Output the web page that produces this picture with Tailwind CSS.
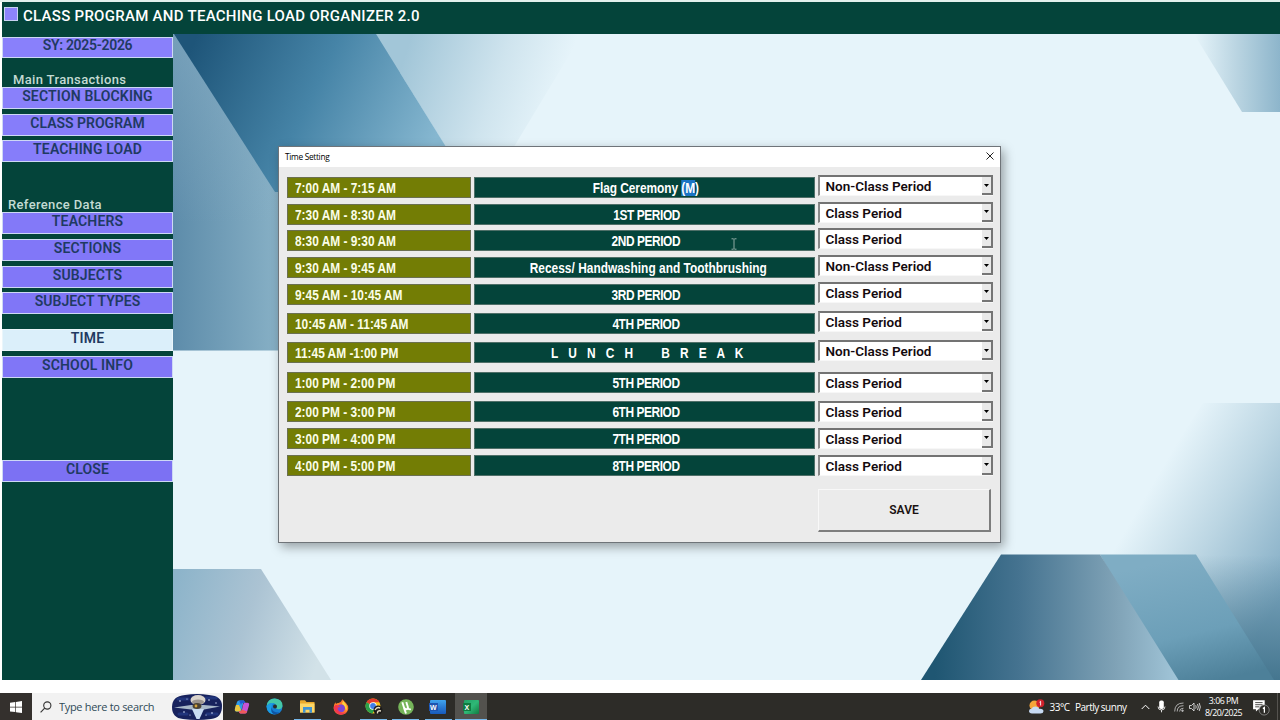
<!DOCTYPE html>
<html lang="en">
  <head>
    <meta charset="UTF-8" />
    <meta name="viewport" content="width=device-width, initial-scale=1.0" />
    <title>Class Program and Teaching Load Organizer</title>
    <script src="https://cdn.jsdelivr.net/npm/@tailwindcss/browser@4"></script>
  </head>
  <body class="w-[1280px] h-[720px] overflow-hidden bg-white font-['Roboto',sans-serif]">
    <div class="relative flex flex-col h-[720px]">
      <!-- header -->
      <header class="flex h-[34px] pl-[2px] border-t-2 border-[#e3f1ec] bg-white shrink-0">
        <div class="flex flex-1 bg-[#04443a] pl-[2px]">
          <div class="w-[14px] h-[14px] mt-[5px] border border-[#c9d2f2] bg-[#8d84fb]"></div>
          <h1 class="ml-[5px] mt-[4px] text-[15px] leading-5 font-medium text-white whitespace-nowrap tracking-[0.28px]">CLASS PROGRAM AND TEACHING LOAD ORGANIZER 2.0</h1>
        </div>
      </header>

      <main class="flex h-[646px] pl-[2px] shrink-0">
        <!-- sidebar -->
        <nav class="w-[171px] shrink-0 bg-[#04443a] pt-[2.5px] text-[14px] leading-[17px] font-semibold text-[#1f3a62] text-center tracking-[0.15px]">
          <div class="h-[21.5px] border border-[#cdd8f5] bg-[#8980fb] leading-[15px] tracking-[-0.3px]">SY: 2025-2026</div>
          <p class="mt-[13px] h-[16px] pl-[11px] text-left text-[13px] font-medium tracking-[0.35px] text-[#c3dbd3]">Main Transactions</p>
          <div class="h-[22px] border border-[#cdd8f5] bg-[#8980fb]">SECTION BLOCKING</div>
          <div class="mt-[4.5px] h-[22px] border border-[#cdd8f5] bg-[#867dfa] tracking-[0px]">CLASS PROGRAM</div>
          <div class="mt-[4.7px] h-[22px] border border-[#cdd8f5] bg-[#867dfa]">TEACHING LOAD</div>
          <p class="mt-[34px] h-[16px] pl-[6px] text-left text-[13px] font-medium tracking-[0.35px] text-[#c3dbd3]">Reference Data</p>
          <div class="h-[22px] border border-[#cdd8f5] bg-[#8379f8]">TEACHERS</div>
          <div class="mt-[4.7px] h-[22px] border border-[#cdd8f5] bg-[#8177f8]">SECTIONS</div>
          <div class="mt-[4.7px] h-[22px] border border-[#cdd8f5] bg-[#8177f8]">SUBJECTS</div>
          <div class="mt-[4.7px] h-[22px] border border-[#cdd8f5] bg-[#8076f7] tracking-[0px]">SUBJECT TYPES</div>
          <div class="mt-[15px] h-[22px] border border-[#eaf6fb] bg-[#dbeffa] leading-[16px]">TIME</div>
          <div class="mt-[4.7px] h-[22px] border border-[#cdd8f5] bg-[#8076f7]">SCHOOL INFO</div>
          <div class="mt-[81.800px] h-[22px] border border-[#cdd8f5] bg-[#7c71f3]">CLOSE</div>
        </nav>

        <!-- wallpaper -->
        <svg class="flex-1 h-[646px]" viewBox="173 34 1107 646" preserveAspectRatio="none">
          <defs>
            <linearGradient id="leftPanel" gradientUnits="userSpaceOnUse" x1="173" y1="0" x2="330" y2="0">
              <stop offset="0" stop-color="#5d8caa" /><stop offset="1" stop-color="#9cc2d3" />
            </linearGradient>
            <linearGradient id="leftPanelTop" x1="0" y1="0" x2="0" y2="1">
              <stop offset="0" stop-color="#8db2c8" stop-opacity=".5" /><stop offset=".6" stop-color="#8db2c8" stop-opacity="0" />
            </linearGradient>
            <linearGradient id="darkHex" gradientUnits="userSpaceOnUse" x1="195" y1="40" x2="430" y2="150">
              <stop offset="0" stop-color="#1e5579" /><stop offset=".5" stop-color="#4684a7" /><stop offset="1" stop-color="#86b7d0" />
            </linearGradient>
            <linearGradient id="lightHex" gradientUnits="userSpaceOnUse" x1="400" y1="70" x2="550" y2="120">
              <stop offset="0" stop-color="#a2c6d8" /><stop offset=".6" stop-color="#cfe4ee" /><stop offset="1" stop-color="#e6f4fa" />
            </linearGradient>
            <linearGradient id="topRight" gradientUnits="userSpaceOnUse" x1="1195" y1="0" x2="1280" y2="0">
              <stop offset="0" stop-color="#e6f4fa" /><stop offset=".5" stop-color="#b9d4e1" /><stop offset="1" stop-color="#8db5cb" />
            </linearGradient>
            <linearGradient id="bottomLeft" gradientUnits="userSpaceOnUse" x1="173" y1="590" x2="325" y2="640">
              <stop offset="0" stop-color="#8db4ca" /><stop offset=".5" stop-color="#abc3d3" /><stop offset="1" stop-color="#d2e2e8" />
            </linearGradient>
            <linearGradient id="farRight" gradientUnits="userSpaceOnUse" x1="1155" y1="480" x2="1300" y2="565">
              <stop offset="0" stop-color="#e6f4fa" /><stop offset=".45" stop-color="#bcd6e3" /><stop offset="1" stop-color="#82acc4" />
            </linearGradient>
            <linearGradient id="farRightFoot" gradientUnits="userSpaceOnUse" x1="0" y1="555" x2="0" y2="680">
              <stop offset="0" stop-color="#45768f" stop-opacity="0" /><stop offset="1" stop-color="#45768f" />
            </linearGradient>
            <linearGradient id="trapLeft" gradientUnits="userSpaceOnUse" x1="935" y1="0" x2="1175" y2="0">
              <stop offset="0" stop-color="#1f5672" /><stop offset=".35" stop-color="#457390" /><stop offset=".75" stop-color="#7fa2b6" /><stop offset="1" stop-color="#a0c4d7" />
            </linearGradient>
            <linearGradient id="trapRight" gradientUnits="userSpaceOnUse" x1="1190" y1="555" x2="1220" y2="680">
              <stop offset="0" stop-color="#7fadc4" /><stop offset=".6" stop-color="#6c9fb8" /><stop offset="1" stop-color="#4d8099" />
            </linearGradient>
          </defs>
          <rect x="173" y="34" width="1107" height="646" fill="#e6f4fa" />
          <path d="M173 34H400V350.500H173Z" fill="url(#leftPanel)" />
          <path d="M173 34H400V350.500H173Z" fill="url(#leftPanelTop)" />
          <path d="M376 34H582L500 170H460Z" fill="url(#lightHex)" />
          <path d="M174 34H376L474 192H275Z" fill="url(#darkHex)" />
          <path d="M1194 34H1280V112H1242Z" fill="url(#topRight)" />
          <path d="M173 569H261L331 680H173Z" fill="url(#bottomLeft)" />
          <path d="M1203 403H1280V680H1180L1100 560Z" fill="url(#farRight)" />
          <path d="M1190 555H1280V680H1190Z" fill="url(#farRightFoot)" />
          <path d="M1100 554.500H1196L1274 680H1170Z" fill="url(#trapRight)" />
          <path d="M1001 554.500H1100L1178.500 680H921Z" fill="url(#trapLeft)" />
        </svg>
      </main>

      <div class="h-[13px] shrink-0 bg-white"></div>

      <!-- taskbar -->
      <footer class="flex h-[27px] shrink-0 bg-[#2d2c28] font-['Open_Sans',sans-serif]">
        <div class="flex w-[32px] items-center justify-center bg-[#34302d]">
          <svg class="w-[12px] h-[12px]" viewBox="0 0 12 12" fill="#fff"><path d="M0 1.700 5.300 1V5.700H0ZM6 .9 12 0V5.700H6ZM0 6.400H5.300V11.100L0 10.400ZM6 6.400H12V12L6 11.200Z" /></svg>
        </div>
        <div class="flex w-[191px] items-center bg-[#f2f2f2] pl-[8px]">
          <svg class="w-[12px] h-[12px]" viewBox="0 0 12 12" fill="none" stroke="#333" stroke-width="1.1"><circle cx="7.300" cy="4.500" r="3.600" /><path d="M4.700 7.200 .6 11.400" /></svg>
          <span class="ml-[6.500px] mt-[1px] w-[112.500px] text-[11.200px] tracking-[-0.55px] word-spacing-normal text-[#2f4a57] whitespace-nowrap"><span class="inline-block origin-left scale-x-[0.98] tracking-[-0.3px]">Type here to search</span></span>
          <svg class="w-[52px] h-[26px]" viewBox="0 0 52 26">
            <path d="M14 1Q26-1 38 1Q51 2 51 12Q51 24 40 25Q26 27 12 25Q1 24 1 13Q1 2 14 1Z" fill="#17225d" />
            <path d="M7 5H17M35 4H45M8 20H16M36 20H46" stroke="#2c489c" stroke-width="3" stroke-linecap="round" opacity=".5" />
            <g fill="#d7e3ff"><circle cx="9" cy="7" r=".8" /><circle cx="16" cy="5" r=".6" /><circle cx="13" cy="18" r=".8" /><circle cx="19" cy="21" r=".6" /><circle cx="38" cy="6" r=".8" /><circle cx="45" cy="9" r=".7" /><circle cx="41" cy="19" r=".8" /><circle cx="35" cy="21" r=".6" /></g>
            <path d="M3 13.500 20 11H33L49 12.500 33 15.500H20Z" fill="#a8b8c9" />
            <path d="M21 15H33L28.500 25H25.500Z" fill="#c9dcf3" />
            <ellipse cx="27" cy="6" rx="7.500" ry="5" fill="#d9d3cb" />
            <ellipse cx="27" cy="8" rx="6" ry="2.500" fill="#9b948f" />
            <ellipse cx="26" cy="12" rx="4.500" ry="3" fill="#4a4234" />
            <circle cx="25" cy="12" r="1.400" fill="#d5a33c" />
          </svg>
        </div>

        <div class="flex pl-[3px]">
          <div class="flex w-[32px] items-center justify-center">
            <svg class="w-[16px] h-[16px]" viewBox="0 0 16 16">
              <path d="M5 1.500H10L7.500 11Q7 12.500 5.500 12.500H2.500Q.3 12.300 1 9.500L3 3Q3.500 1.500 5 1.500Z" fill="#2d9be8" />
              <path d="M1 9.500Q.3 12.500 2.500 12.500H5.500L7 11 5 6H2Z" fill="#e9c63e" />
              <path d="M5 1.500H9.500Q11 1.500 11.500 4H8.500Q7.500 4 7 6Z" fill="#2459d6" />
              <path d="M11 14.500H6.500Q5.500 14.500 4.700 12.500H6.500Q7.500 12.300 8 10.500L9 6Q9.500 3.800 11 3.800H13.500Q15.700 4 15 6.500L13 13Q12.500 14.500 11 14.500Z" fill="#c653d7" />
              <path d="M4.700 12.500Q5.500 14.500 6.500 14.500H11Q12.500 14.500 13 12.500L8 10.500Q7.500 12.500 4.700 12.500Z" fill="#ee5a5a" />
            </svg>
          </div>
          <div class="flex w-[33px] items-center justify-center">
            <svg class="w-[17px] h-[17px]" viewBox="0 0 17 17">
              <circle cx="8.500" cy="8.500" r="8" fill="#1680d4" />
              <path d="M.7 8Q1.500.5 8.800.5Q16.500 1 16.500 7.800Q16 11.300 12.500 11.300Q9.500 11.200 10.300 9.300Q11 6 7.500 5.200Q3 4.500 .7 8Z" fill="#44c7a8" />
              <path d="M.6 8Q3 4.500 7.500 5.200Q5 7 5.500 10.500Q6.500 14 11 15.500Q7 17.500 3.200 14.500Q.3 12 .6 8Z" fill="#1b9de4" />
              <path d="M5.500 9.500Q6.500 15 13.500 14.500Q11 17 7.500 16Q4.500 14.500 5.500 9.500Z" fill="#0f55a5" />
              <circle cx="9" cy="8.500" r="2" fill="#2d2c28" />
            </svg>
          </div>
          <div class="relative flex w-[33px] items-center justify-center">
            <svg class="w-[15px] h-[13px]" viewBox="0 0 15 13">
              <path d="M0 1Q0 .3.700.3H5L6.500 2H14.500V12.500H0Z" fill="#e9a92c" /><path d="M0 3.500H14.500V12.500H0Z" fill="#fbd667" />
              <path d="M3 7H12V12.800H9.500V9.700H5.500V12.800H3Z" fill="#3f93d2" />
            </svg>
            <div class="absolute bottom-0 w-[27px] h-[1px] bg-[#76b9ed]"></div>
          </div>
          <div class="flex w-[33px] items-center justify-center">
            <svg class="w-[16px] h-[16px]" viewBox="0 0 16 16">
              <path d="M9.500.3Q11 2.500 13 4Q16 7 15.300 10Q14 15.500 8 15.700Q1.500 15.500.6 9.500Q.5 6 2.300 3.300L3 5Q4 3.700 5.500 4Q8 3.500 9.500.3Z" fill="#ff7a2a" />
              <path d="M10 1.500Q12 4 13 5.500Q15 9 13 12Q12 7 9 5Z" fill="#ffcf3b" />
              <circle cx="8" cy="9.300" r="3.900" fill="#7a45d6" />
              <path d="M.7 8Q1 13 5 15Q10 17 13.500 13Q9.500 14.500 6.500 12.500Q4 10.500 5 8.500L7.500 8Q5.500 5.500 2.500 6Z" fill="#f2384f" />
            </svg>
          </div>
          <div class="relative flex w-[33px] items-center justify-center">
            <svg class="w-[18px] h-[17px]" viewBox="0 0 18 17">
              <circle cx="8" cy="8" r="7.500" fill="#fbc21a" />
              <path d="M8 8 1.500 4.200A7.500 7.500 0 0 1 14.500 4.200H8Z" fill="#e33b2e" />
              <path d="M8 8 1.500 4.200A7.500 7.500 0 0 0 7.500 15.500L10.500 10Z" fill="#2ba24c" />
              <circle cx="8" cy="8" r="3.700" fill="#fff" /><circle cx="8" cy="8" r="2.900" fill="#3f7de8" />
              <circle cx="13" cy="12" r="4.500" fill="#1d1b19" /><path d="M10 12Q12 8.500 15 10M12.500 15.500Q12 12 16 13" stroke="#e8dfc7" stroke-width="1.400" fill="none" />
            </svg>
            <div class="absolute bottom-0 w-[27px] h-[1px] bg-[#76b9ed]"></div>
          </div>
          <div class="relative flex w-[31px] items-center justify-center">
            <svg class="w-[16px] h-[16px]" viewBox="0 0 16 16">
              <circle cx="8" cy="8" r="7.800" fill="#76b55a" />
              <path d="M4.300 3.200 6 8.500Q7 10.800 9 10.200 10.300 9.500 9.800 7.800L8.300 3M9.700 8Q10.300 11 12.800 10.200M6 9 8 14.500" stroke="#fff" stroke-width="1.900" fill="none" />
            </svg>
            <div class="absolute bottom-0 w-[27px] h-[1px] bg-[#76b9ed]"></div>
          </div>
          <div class="relative flex w-[34px] items-center justify-center font-['Liberation_Sans',sans-serif]">
            <div class="relative w-[16px] h-[14px] rounded-[1px] bg-linear-to-b from-[#41a5ee] via-[#2b7cd3] to-[#185abd]">
              <span class="absolute left-[-1px] top-[3px] w-[8.500px] h-[8.500px] bg-[#1d54b0] text-white text-[7px] leading-[9px] font-bold text-center">W</span>
            </div>
            <div class="absolute bottom-0 w-[27px] h-[1px] bg-[#76b9ed]"></div>
          </div>
          <div class="relative flex w-[32px] items-center justify-center bg-[#53524e] font-['Liberation_Sans',sans-serif]">
            <div class="relative w-[15px] h-[14px] rounded-[1px] bg-linear-to-br from-[#21a366] via-[#2fb877] to-[#107c41]">
              <span class="absolute left-[-1px] top-[3px] w-[8.500px] h-[8.500px] bg-[#107c41] text-white text-[7px] leading-[9px] font-bold text-center">X</span>
            </div>
            <div class="absolute bottom-0 w-full h-[1px] bg-[#76b9ed]"></div>
          </div>
        </div>

        <div class="ml-auto flex items-center text-white">
          <svg class="w-[17px] h-[16px]" viewBox="0 0 17 16">
            <circle cx="6.500" cy="6.500" r="5" fill="#f5a53a" />
            <path d="M4 14.500Q1 14.300 1 12Q1.200 9.800 3.500 9.800Q4.500 7.500 7.500 7.500Q10.500 7.700 11.200 9.800Q15.500 9.500 15.500 12.300Q15.300 14.500 12.500 14.500Z" fill="#c7daf3" />
            <circle cx="12.300" cy="4.300" r="4" fill="#d0212c" />
            <path d="M11.500 3.200 12.600 2.300V6.500" stroke="#fff" stroke-width=".9" fill="none" />
          </svg>
          <span class="ml-[5px] mt-[1px] w-[25.500px] text-[10px] tracking-[-0.5px] whitespace-nowrap">33°C</span>
          <span class="mt-[1px] w-[66px] text-[10px] tracking-[-0.5px] whitespace-nowrap">Partly sunny</span>
          <svg class="w-[9px] h-[6px]" viewBox="0 0 9 6" fill="none" stroke="#fff" stroke-width="1"><path d="M.7 5 4.500 1.200 8.300 5" /></svg>
          <svg class="ml-[7px] w-[9px] h-[13px]" viewBox="0 0 9 13"><rect x="2.200" y="0.500" width="4.600" height="8.500" rx="1.800" fill="#fff" /><path d="M1 6.500Q1 10 4.500 10T8 6.500M4.500 10V12.300" stroke="#ddd" fill="none" /></svg>
          <svg class="ml-[8px] w-[10px] h-[10px]" viewBox="0 0 10 10" fill="none" stroke="#bbb" stroke-width=".9"><path d="M.7 9.500Q.7 1 9.500 1M3.200 9.500Q3.200 3.700 9.500 3.700M5.600 9.500Q5.600 6.200 9.500 6.200" /><circle cx="8.500" cy="8.700" r=".8" fill="#bbb" /></svg>
          <svg class="ml-[5px] w-[12px] h-[10px]" viewBox="0 0 12 10" fill="none" stroke="#ddd" stroke-width=".9"><path d="M.5 3.500H2.500L5 1V9L2.500 6.500H.5ZM6.700 3.300Q7.700 5 6.700 6.700M8.500 2Q10.200 5 8.500 8M10.200 1Q12.500 5 10.200 9" /></svg>
          <div class="ml-[2px] w-[41px] text-center text-[8.800px] leading-[12px] tracking-[-0.5px] whitespace-nowrap">
            <div>3:06 PM</div>
            <div>8/20/2025</div>
          </div>
          <svg class="ml-[8px] mr-[7px] w-[18px] h-[19px]" viewBox="0 0 17 18">
            <path d="M1 3H12V11.500H6L3.700 13.800V11.500H1Z" fill="#fff" /><path d="M3 5.300H10M3 7.300H10M3 9.300H7" stroke="#2d2c28" stroke-width=".8" />
            <circle cx="11.500" cy="12.300" r="4.800" fill="#2d2c28" stroke="#999" stroke-width=".7" /><path d="M10.300 11 11.700 10V15" stroke="#fff" stroke-width="1.200" fill="none" />
          </svg>
          <div class="w-px h-full bg-[#55534f] mr-[2px]"></div>
        </div>
      </footer>

      <!-- Time Setting window -->
      <section class="absolute left-[278px] top-[146px] w-[723px] h-[397px] flex flex-col border border-[#6f7479] bg-[#ebebeb] shadow-[3px_4px_10px_rgba(0,0,0,0.35)]">
        <div class="flex h-[20px] shrink-0 items-center justify-between bg-white pl-[6px] pr-[6px]">
          <span class="font-['Open_Sans',sans-serif] text-[8.300px] tracking-[-0.3px] text-black">Time Setting</span>
          <svg class="w-[8px] h-[8px] mt-[-2px]" viewBox="0 0 8 8" stroke="#222" stroke-width="1"><path d="M.5.500 7.500 7.500M7.500.500.500 7.500" /></svg>
        </div>
        <div id="rows" class="pl-[8px]"></div>
        <button class="ml-[539px] mt-[13.500px] w-[173px] h-[43px] border-r-2 border-b-2 border-t border-l border-t-[#f8f8f8] border-l-[#f8f8f8] border-r-[#7d7d7d] border-b-[#7d7d7d] bg-[#ebebeb] text-[12px] font-semibold text-[#1a1212] tracking-[0px]">SAVE</button>
      </section>

      <!-- text cursor -->
      <svg class="absolute left-[730px] top-[238px] w-[8px] h-[12px]" viewBox="0 0 8 12" fill="none" stroke="#9fb7b1" stroke-width=".9"><path d="M1.500.8H3.500L4 1.300 4.500.8H6.500M4 1.300V10.700M1.500 11.200H3.500L4 10.700 4.500 11.200H6.500" /></svg>
    </div>

    <script>
      // label, period name, type, top of the row, offset of the dropdown
      var rows = [
        ["7:00 AM - 7:15 AM", '<span class="tracking-[-0.05px]">Flag Ceremony <span class="bg-[#1b74c4]">(M</span>)</span>', "Non-Class Period", 177, -2],
        ["7:30 AM - 8:30 AM", "1ST PERIOD", "Class Period", 203.6, -2],
        ["8:30 AM - 9:30 AM", "2ND PERIOD", "Class Period", 230.3, -2],
        ["9:30 AM - 9:45 AM", '<span class="ml-[4px] tracking-[0.03px]">Recess/ Handwashing and Toothbrushing</span>', "Non-Class Period", 257.3, -2],
        ["9:45 AM - 10:45 AM", "3RD PERIOD", "Class Period", 283.7, -2],
        ["10:45 AM - 11:45 AM", "4TH PERIOD", "Class Period", 313.3, -2],
        ["11:45 AM -1:00 PM", '<span class="ml-[3px] whitespace-pre tracking-[1.45px]">L  U  N  C  H      B  R  E  A  K</span>', "Non-Class Period", 342.4, -2],
        ["1:00 PM - 2:00 PM", "5TH PERIOD", "Class Period", 372, 0],
        ["2:00 PM - 3:00 PM", "6TH PERIOD", "Class Period", 401.3, 0],
        ["3:00 PM - 4:00 PM", "7TH PERIOD", "Class Period", 428, 0],
        ["4:00 PM - 5:00 PM", "8TH PERIOD", "Class Period", 454.7, 0],
      ];
      var html = "";
      var bottom = 167;
      rows.forEach(function (r) {
        html +=
          '<div class="flex h-[21px]" style="margin-top:' + (r[3] - bottom).toFixed(1) + 'px">' +
          '<div class="w-[184px] border border-[#6b7050] bg-[#737d05] pl-[6.500px] text-[14.500px] leading-[20px] font-bold text-[#fbfde8] whitespace-nowrap font-[\'Liberation_Sans\',sans-serif]"><span class="inline-block origin-left scale-x-[0.82]">' + r[0] + "</span></div>" +
          '<div class="ml-[2.500px] flex justify-center w-[341.500px] border border-[#4f6f68] bg-[#04443a] pl-[4px] text-[14.500px] leading-[20px] font-bold text-white whitespace-nowrap font-[\'Liberation_Sans\',sans-serif]"><span class="inline-block scale-x-[0.82] tracking-[-0.5px]">' + r[1] + "</span></div>" +
          '<div class="ml-[2.500px] flex w-[175px] border-t-2 border-l-2 border-t-[#737373] border-l-[#8a8a8a] border-b border-b-[#f7f7f7] bg-white" style="margin-top:' + r[4] + "px;margin-bottom:" + -r[4] + 'px">' +
          '<span class="flex-1 pl-[6px] text-[13.500px] leading-[18px] font-semibold text-[#140a0e] whitespace-nowrap tracking-[0px]">' + r[2] + "</span>" +
          '<span class="flex w-[11px] items-center justify-center border-r-2 border-b-2 border-[#757575] bg-[#e9e9e9]"><svg class="w-[5px] h-[3px]" viewBox="0 0 5 3"><path d="M0 0H5L2.500 3Z" /></svg></span>' +
          "</div></div>";
        bottom = r[3] + 21;
      });
      document.getElementById("rows").innerHTML = html;
    </script>
  </body>
</html>
